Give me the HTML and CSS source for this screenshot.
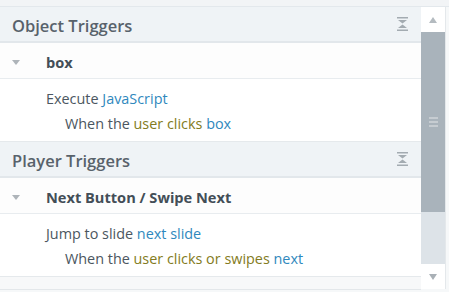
FILE: index.html
```html
<!DOCTYPE html>
<html lang="en">

<head>
  <meta charset="UTF-8">
  <meta name="viewport" content="width=device-width, initial-scale=1.0">
  <link rel="stylesheet" href="styles.css">
  <title>Triggers</title>
</head>

<body>
  <div class="top-strip"></div>
  <div class="main">
    <div class="list">
      <div class="section-header">
        <span class="section-title">Object Triggers</span>
        <svg class="collapse" width="11" height="14" viewBox="0 0 11 14">
          <rect x="0" y="0" width="11" height="1.5" />
          <polygon points="1,3 10,3 5.5,6.5" />
          <polygon points="5.5,7.5 10,11 1,11" />
          <rect x="0" y="12.5" width="11" height="1.5" />
        </svg>
      </div>
      <div class="item-row">
        <span class="caret"></span>
        <span class="item-name">box</span>
      </div>
      <div class="item-body">
        <p class="action">Execute <span class="blue">JavaScript</span></p>
        <p class="condition">When the <span class="olive">user clicks</span> <span class="blue">box</span></p>
      </div>

      <div class="section-header">
        <span class="section-title">Player Triggers</span>
        <svg class="collapse" width="11" height="14" viewBox="0 0 11 14">
          <rect x="0" y="0" width="11" height="1.5" />
          <polygon points="1,3 10,3 5.5,6.5" />
          <polygon points="5.5,7.5 10,11 1,11" />
          <rect x="0" y="12.5" width="11" height="1.5" />
        </svg>
      </div>
      <div class="item-row">
        <span class="caret"></span>
        <span class="item-name">Next Button / Swipe Next</span>
      </div>
      <div class="item-body">
        <p class="action">Jump to slide <span class="blue">next slide</span></p>
        <p class="condition">When the <span class="olive">user clicks or swipes</span> <span class="blue">next</span></p>
      </div>
      <div class="item-row partial"></div>
    </div>

    <div class="scrollbar">
      <div class="scroll-btn"><span class="arrow-up"></span></div>
      <div class="scroll-thumb">
        <span class="grip"></span>
        <span class="grip"></span>
        <span class="grip"></span>
      </div>
      <div class="scroll-track"></div>
      <div class="scroll-btn"><span class="arrow-down"></span></div>
    </div>
  </div>
</body>

</html>
```

FILE: styles.css
```css
* {
  margin: 0;
  padding: 0;
  box-sizing: border-box;
}

body {
  font-family: 'Open Sans', sans-serif;
  color: #4b5660;
  background: #f6f8f9;
  width: 449px;
  height: 292px;
  overflow: hidden;
}

.top-strip {
  height: 7px;
  background: #f2f4f6;
  border-bottom: 1px solid #e3e8ec;
}

.main {
  display: flex;
  flex-direction: row;
  align-items: flex-start;
}

.list {
  flex: 1;
  background: #fff;
}

.section-header {
  display: flex;
  align-items: center;
  justify-content: space-between;
  height: 36px;
  padding: 2px 12px 0 12px;
  background: #eff3f6;
  border-bottom: 2px solid #e2e7eb;
}

.section-title {
  font-size: 16.5px;
  font-weight: 600;
  color: #58626b;
}

.collapse {
  fill: #a3abb1;
  margin-right: 1px;
  margin-top: -2px;
}

.item-row {
  display: flex;
  align-items: center;
  height: 36px;
  padding: 3px 0 0 12px;
  background: #fdfdfd;
  border-bottom: 1px solid #e8ecef;
}

.item-row.partial {
  height: 13px;
  padding: 0;
  background: #f7f8f9;
  border-bottom: 1px solid #e3e7ea;
}

.caret {
  width: 0;
  height: 0;
  border-left: 4px solid transparent;
  border-right: 4px solid transparent;
  border-top: 5px solid #aeb4b9;
  margin-right: 26px;
}

.item-name {
  font-size: 14.6px;
  font-weight: bold;
  color: #434e57;
}

.item-body {
  padding: 7px 0 5px 46px;
  border-bottom: 1px solid #e5e9ec;
  font-size: 14.4px;
  line-height: 25px;
}

.condition {
  padding-left: 19px;
}

.blue {
  color: #2f88bd;
}

.olive {
  color: #837b22;
}

.scrollbar {
  width: 25px;
  margin-right: 3px;
  display: flex;
  flex-direction: column;
  background: #dde3e8;
  border-right: 1px solid #e4e8eb;
}

.scroll-btn {
  height: 25px;
  background: #fff;
  display: flex;
  align-items: center;
  justify-content: center;
}

.arrow-up {
  width: 0;
  height: 0;
  border-left: 4px solid transparent;
  border-right: 4px solid transparent;
  border-bottom: 6px solid #b4bbc0;
}

.arrow-down {
  width: 0;
  height: 0;
  border-left: 4px solid transparent;
  border-right: 4px solid transparent;
  border-top: 6px solid #a9b0b6;
}

.scroll-thumb {
  height: 180px;
  background: #a9b3bb;
  display: flex;
  flex-direction: column;
  align-items: center;
  justify-content: center;
  gap: 2px;
}

.grip {
  display: block;
  width: 9px;
  height: 2px;
  background: #c6ccd1;
}

.scroll-track {
  height: 52px;
}
```
